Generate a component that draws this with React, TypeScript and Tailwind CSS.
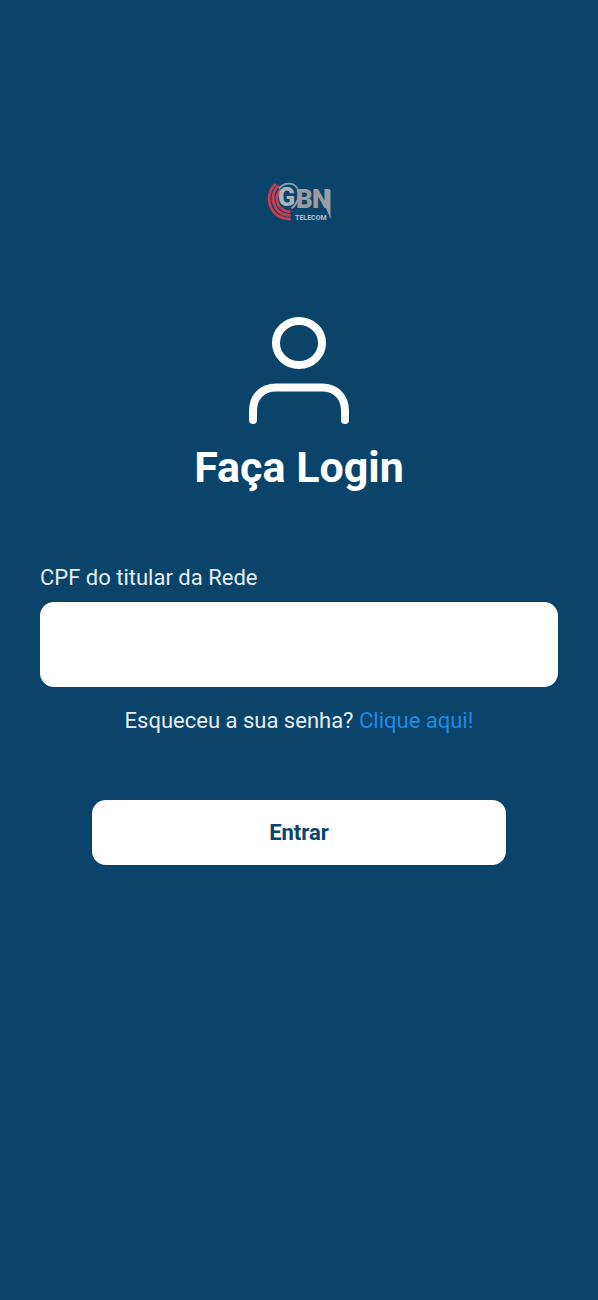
import { useState } from 'react';

function GbnLogo() {
  return (
    <svg viewBox="0 0 66 40" role="img" aria-label="GBN Telecom" className="h-10 w-[66px]">
      <g fill="none" stroke="#c4404f" strokeWidth="2.8">
        <path d="M10 3C2 9 1.500 20 6 28.500c4 7 10 9.500 18.500 9.500" />
        <path d="M13 4.500C6 10 5.500 19 9.500 26.500c3 5.500 7.500 7.800 15 7.800" />
        <path d="M14.500 8.500C9.800 14 10 20 13 25c3 4 6.500 5.700 11.500 5.700" />
      </g>
      <path
        d="M13 7.500C18 1 27.500 1 31.500 7.500M31.500 8c2.500 7 0 15-6 19.500"
        fill="none"
        stroke="#8fa3b1"
        strokeWidth="1.800"
      />
      <g fontFamily="Roboto, sans-serif" fontWeight="900">
        <text x="12" y="25" fontSize="25" fill="#a9b4bb">
          G
        </text>
        <text x="30" y="27" fontSize="26" fill="#9a9c9e">
          B
        </text>
        <text x="46" y="27" fontSize="26" fill="#9a9c9e">
          N
        </text>
        <text x="29" y="39" fontSize="7" fill="#a9b4bb">
          TELECOM
        </text>
      </g>
      <path d="M60 8.500h4.500V38L60 27z" fill="#9a9c9e" />
    </svg>
  );
}

function UserIcon() {
  return (
    <svg
      viewBox="0 0 102 108"
      fill="none"
      stroke="#fff"
      strokeWidth="8"
      strokeLinecap="round"
      aria-hidden="true"
      className="h-[108px] w-[102px]"
    >
      <ellipse cx="51" cy="26" rx="23" ry="22" />
      <path d="M5 103V94c0-14 9-23.500 23-23.500h46c14 0 23 9.500 23 23.500v9" />
    </svg>
  );
}

export default function App() {
  const [cpf, setCpf] = useState('');

  return (
    <main className="flex min-h-screen flex-col items-center bg-[#0a446b] px-10 pt-[181px] pb-12 font-['Roboto',sans-serif] text-white">
      <GbnLogo />

      <div className="mt-24 flex flex-col items-center">
        <UserIcon />
        <h1 className="mt-4 text-[43px] leading-[52px] font-bold">Faça Login</h1>
      </div>

      <form
        className="mt-[71px] flex w-full flex-col items-center"
        onSubmit={(e) => e.preventDefault()}
      >
        <label htmlFor="cpf" className="self-start text-[22px] leading-7 text-[#e6edf2]">
          CPF do titular da Rede
        </label>
        <input
          id="cpf"
          type="text"
          inputMode="numeric"
          value={cpf}
          onChange={(e) => setCpf(e.target.value)}
          className="mt-2.5 h-[85px] w-full rounded-[14px] bg-white px-5 text-[22px] text-[#0a446b] outline-none"
        />

        <p className="mt-5 text-[22px] leading-7 text-[#e6edf2]">
          Esqueceu a sua senha?{' '}
          <a href="#recuperar" className="text-[#2489e0]">
            Clique aqui!
          </a>
        </p>

        <button
          type="submit"
          className="mt-[65px] h-[65px] w-4/5 rounded-[14px] bg-white text-[22px] leading-7 font-bold text-[#0a446b]"
        >
          Entrar
        </button>
      </form>
    </main>
  );
}
